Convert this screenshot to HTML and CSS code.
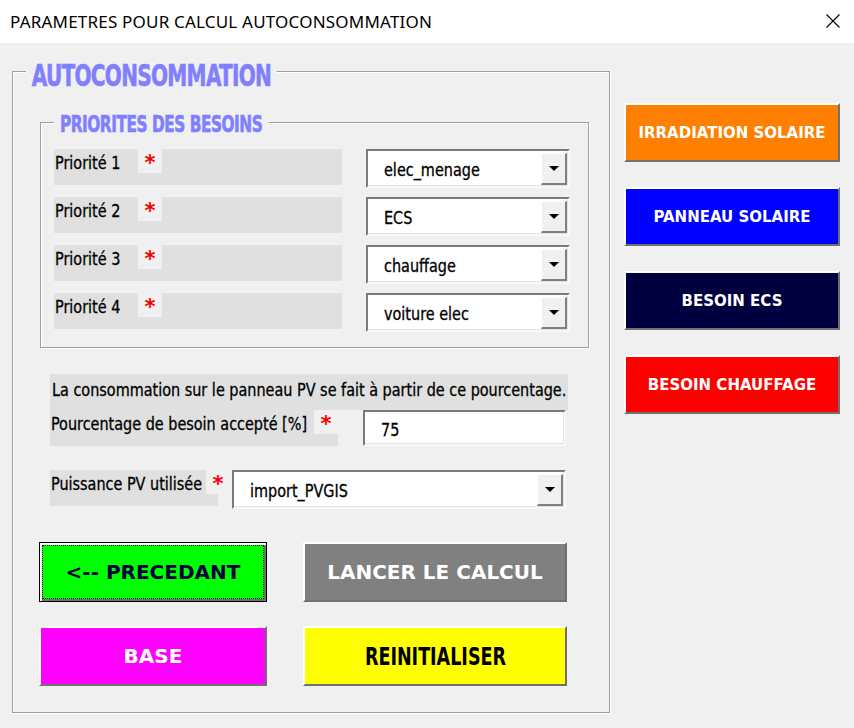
FILE: index.html
```html
<!DOCTYPE html>
<html lang="fr">
<head>
<meta charset="utf-8">
<title>PARAMETRES POUR CALCUL AUTOCONSOMMATION</title>
<link rel="stylesheet" href="styles.css">
</head>
<body>
<div class="titlebar">
  <span class="title">PARAMETRES POUR CALCUL AUTOCONSOMMATION</span>
  <svg class="close" viewBox="0 0 16 16" width="16" height="16"><path d="M1.5 1.5 L14.5 14.5 M14.5 1.5 L1.5 14.5" stroke="#000" stroke-width="1.1" fill="none"/></svg>
</div>
<div class="body">
  <div class="frame outer">
    <div class="frame-title big">AUTOCONSOMMATION</div>
    <div class="frame inner">
      <div class="frame-title small">PRIORITES DES BESOINS</div>
      <div class="prio-row">
        <div class="lbl lbl-prio"><span class="lbl-text w84"><span class="cx">Priorité 1</span></span><span class="req">*</span></div>
        <div class="combo combo-prio"><span class="combo-text"><span class="cx">elec_menage</span></span><span class="combo-btn"><span class="arrow"></span></span></div>
      </div>
      <div class="prio-row">
        <div class="lbl lbl-prio"><span class="lbl-text w84"><span class="cx">Priorité 2</span></span><span class="req">*</span></div>
        <div class="combo combo-prio"><span class="combo-text"><span class="cx">ECS</span></span><span class="combo-btn"><span class="arrow"></span></span></div>
      </div>
      <div class="prio-row">
        <div class="lbl lbl-prio"><span class="lbl-text w84"><span class="cx">Priorité 3</span></span><span class="req">*</span></div>
        <div class="combo combo-prio"><span class="combo-text"><span class="cx">chauffage</span></span><span class="combo-btn"><span class="arrow"></span></span></div>
      </div>
      <div class="prio-row">
        <div class="lbl lbl-prio"><span class="lbl-text w84"><span class="cx">Priorité 4</span></span><span class="req">*</span></div>
        <div class="combo combo-prio"><span class="combo-text"><span class="cx">voiture elec</span></span><span class="combo-btn"><span class="arrow"></span></span></div>
      </div>
    </div>
    <div class="lower">
      <div class="info"><span class="cx">La consommation sur le panneau PV se fait à partir de ce pourcentage.</span></div>
      <div class="pct-row">
        <div class="lbl lbl-pct"><span class="lbl-text w264"><span class="cx">Pourcentage de besoin accepté [%]</span></span><span class="req">*</span></div>
        <div class="field"><span class="combo-text"><span class="cx">75</span></span></div>
      </div>
      <div class="pv-row">
        <div class="lbl lbl-pv"><span class="lbl-text"><span class="cx">Puissance PV utilisée</span></span></div>
        <span class="req req-pv">*</span>
        <div class="combo combo-pv"><span class="combo-text"><span class="cx">import_PVGIS</span></span><span class="combo-btn"><span class="arrow"></span></span></div>
      </div>
    </div>
    <div class="btn-grid">
      <div class="btn default green"><span>&lt;-- PRECEDANT</span></div>
      <div class="btn grey">LANCER LE CALCUL</div>
      <div class="btn magenta">BASE</div>
      <div class="btn yellow"><span class="cy">REINITIALISER</span></div>
    </div>
  </div>
  <div class="side">
    <div class="sbtn orange">IRRADIATION SOLAIRE</div>
    <div class="sbtn blue">PANNEAU SOLAIRE</div>
    <div class="sbtn navy">BESOIN ECS</div>
    <div class="sbtn red">BESOIN CHAUFFAGE</div>
  </div>
</div>
</body>
</html>
```
FILE: styles.css
```css
* { box-sizing: border-box; }
html, body { margin: 0; padding: 0; }
body {
  background: #f0f0f0;
  width: 854px;
  height: 728px;
  overflow: hidden;
  font-family: "DejaVu Sans Condensed", "DejaVu Sans", sans-serif;
}
.cx {
  display: inline-block;
  transform: scaleX(0.89);
  transform-origin: left center;
  white-space: nowrap;
  -webkit-text-stroke: 0.3px currentColor;
}
.titlebar {
  height: 43px;
  background: #fff;
  display: flex;
  align-items: center;
  justify-content: space-between;
  padding: 0 13px 0 10px;
}
.title {
  font-family: "Noto Sans", sans-serif;
  font-size: 17px;
  letter-spacing: 0.2px;
  color: #000;
  padding-bottom: 1px;
}
.close { display: block; margin-top: -1px; }

.body {
  display: flex;
  align-items: flex-start;
  padding: 28px 0 0 12px;
}
.frame {
  position: relative;
  border: 1px solid #a0a0a0;
  box-shadow: 1px 1px 0 #fff, inset 1px 1px 0 #fff;
}
.outer {
  width: 598px;
  height: 642px;
  padding: 50px 0 0 27px;
}
.frame-title {
  position: absolute;
  background: #f0f0f0;
  color: #8080ff;
  font-family: "DejaVu Sans Condensed", "DejaVu Sans", sans-serif;
  font-weight: bold;
  white-space: nowrap;
  transform-origin: left center;
  -webkit-text-stroke: 0.6px #8080ff;
}
.big {
  top: -13px;
  left: 13px;
  font-size: 31px;
  line-height: 32px;
  padding: 0 8px;
  letter-spacing: -1px;
  transform: scaleX(0.72);
}
.small {
  top: -11px;
  left: 13px;
  font-size: 23px;
  line-height: 24px;
  padding: 0 8px;
  letter-spacing: -0.6px;
  transform: scaleX(0.74);
}
.inner {
  width: 549px;
  height: 226px;
  padding: 26px 0 0 13px;
}
.prio-row {
  display: flex;
  gap: 24px;
  height: 39px;
  margin-bottom: 9px;
}
.lbl {
  display: flex;
  align-items: flex-start;
  background: #e0e0e0;
  height: 36px;
}
.lbl-text {
  font-size: 18px;
  line-height: 24px;
  padding: 2px 0 0 1px;
  color: #000;
  white-space: nowrap;
}
.w84 { width: 84px; }
.w264 { width: 264px; }
.req {
  display: flex;
  justify-content: center;
  width: 24px;
  height: 24px;
  background: #f0f0f0;
  color: #ff0000;
  font-family: "DejaVu Sans", sans-serif;
  font-weight: bold;
  font-size: 21px;
  line-height: 28px;
}
.lbl-prio { width: 288px; }
.combo, .field {
  display: flex;
  align-items: center;
  background: #fff;
  border: 2px solid;
  border-color: #7a7a7a #f8f8f8 #f8f8f8 #7a7a7a;
  box-shadow: inset -1px -1px 0 #e3e3e3;
}
.combo-prio { width: 204px; height: 39px; }
.combo-text {
  flex: 1;
  font-size: 18px;
  padding: 2px 0 0 16px;
  color: #000;
  white-space: nowrap;
}
.combo-btn {
  align-self: stretch;
  width: 26px;
  margin: 2px 1px 1px 0;
  background: #f0f0f0;
  border: 1px solid;
  border-width: 1px 2px 2px 1px;
  border-color: #fff #808080 #808080 #fff;
  display: flex;
  align-items: center;
  justify-content: center;
}
.arrow {
  width: 0;
  height: 0;
  border-left: 5px solid transparent;
  border-right: 5px solid transparent;
  border-top: 5px solid #000;
}

.lower {
  margin: 26px 0 0 10px;
}
.info {
  width: 518px;
  height: 36px;
  background: #e0e0e0;
  font-size: 18px;
  line-height: 24px;
  padding: 4px 0 0 2px;
  white-space: nowrap;
  color: #000;
}
.pct-row {
  display: flex;
  gap: 25px;
  height: 36px;
}
.lbl-pct { width: 288px; }
.field { width: 203px; height: 36px; }
.pv-row {
  display: flex;
  align-items: flex-start;
  margin-top: 24px;
  height: 39px;
}
.lbl-pv { width: 156px; }
.req-pv {
  height: 36px;
  background:
    linear-gradient(#f0f0f0 24px, transparent 24px),
    linear-gradient(to right, #e0e0e0 12px, transparent 12px);
}
.combo-pv { width: 334px; height: 39px; margin-left: 2px; }

.btn-grid {
  display: grid;
  grid-template-columns: 228px 264px;
  grid-auto-rows: 60px;
  column-gap: 36px;
  row-gap: 24px;
  margin: 33px 0 0 -1px;
}
.btn, .sbtn {
  display: flex;
  align-items: center;
  justify-content: center;
  border: 2px solid;
  border-color: #fff #707070 #707070 #fff;
  font-family: "DejaVu Sans", sans-serif;
  font-weight: bold;
  white-space: nowrap;
}
.btn { font-size: 20px; }
.btn.default {
  border: 1px solid #000;
  box-shadow: inset 2px 2px 0 #fff, inset -2px -2px 0 #707070;
  outline: 1px dotted #000;
  outline-offset: -4px;
}
.green { background: #00ff00; color: #000040; }
.grey { background: #808080; color: #fff; }
.magenta { background: #ff00ff; color: #fff; }
.yellow {
  background: #ffff00;
  color: #000;
  font-family: "DejaVu Sans Condensed", "DejaVu Sans", sans-serif;
  font-size: 25px;
}
.cy {
  display: inline-block;
  transform: scaleX(0.78);
}

.side {
  display: flex;
  flex-direction: column;
  gap: 25px;
  margin: 32px 0 0 14px;
}
.sbtn {
  width: 216px;
  height: 59px;
  color: #fff;
  font-size: 15px;
}
.orange { background: #ff8000; }
.blue { background: #0000ff; }
.navy { background: #000040; }
.red { background: #ff0000; }
```
